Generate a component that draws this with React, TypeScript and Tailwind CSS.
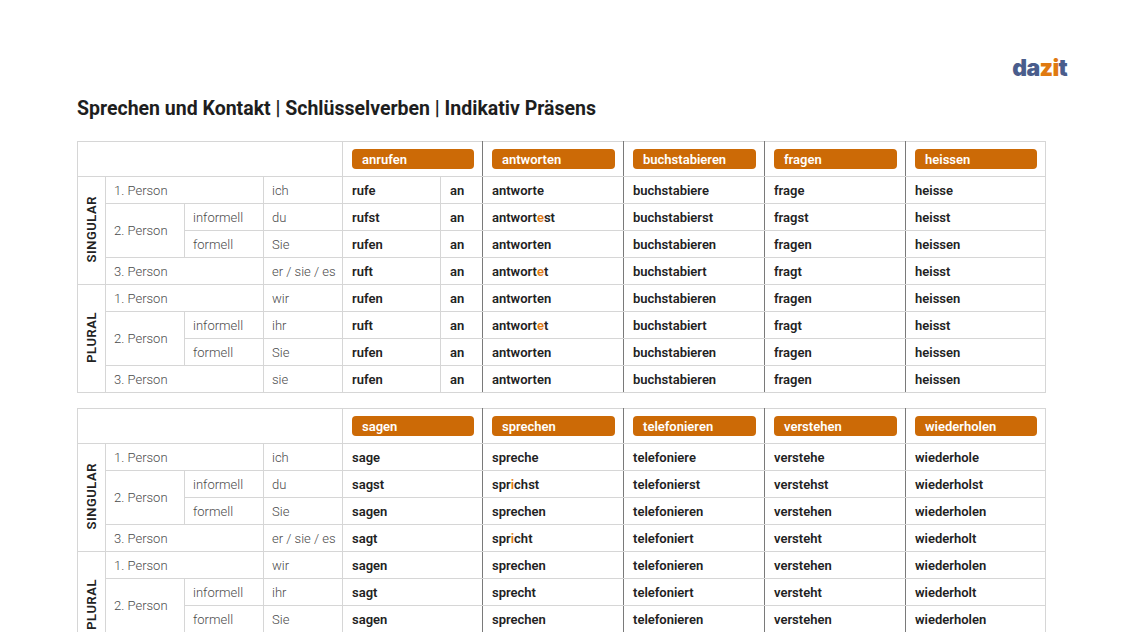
import React from 'react';

type Block = {
  verbs: string[];
  separable?: boolean;
  forms: string[][];
};

const persons = [
  { group: 'SINGULAR', person: '1. Person', pron: 'ich' },
  { person: '2. Person', sub: 'informell', pron: 'du' },
  { sub: 'formell', pron: 'Sie' },
  { person: '3. Person', pron: 'er / sie / es' },
  { group: 'PLURAL', person: '1. Person', pron: 'wir' },
  { person: '2. Person', sub: 'informell', pron: 'ihr' },
  { sub: 'formell', pron: 'Sie' },
  { person: '3. Person', pron: 'sie' },
];

const blocks: Block[] = [
  {
    verbs: ['anrufen', 'antworten', 'buchstabieren', 'fragen', 'heissen'],
    separable: true,
    forms: [
      ['rufe', 'rufst', 'rufen', 'ruft', 'rufen', 'ruft', 'rufen', 'rufen'],
      ['antworte', 'antwort[e]st', 'antworten', 'antwort[e]t', 'antworten', 'antwort[e]t', 'antworten', 'antworten'],
      ['buchstabiere', 'buchstabierst', 'buchstabieren', 'buchstabiert', 'buchstabieren', 'buchstabiert', 'buchstabieren', 'buchstabieren'],
      ['frage', 'fragst', 'fragen', 'fragt', 'fragen', 'fragt', 'fragen', 'fragen'],
      ['heisse', 'heisst', 'heissen', 'heisst', 'heissen', 'heisst', 'heissen', 'heissen'],
    ],
  },
  {
    verbs: ['sagen', 'sprechen', 'telefonieren', 'verstehen', 'wiederholen'],
    forms: [
      ['sage', 'sagst', 'sagen', 'sagt', 'sagen', 'sagt', 'sagen', 'sagen'],
      ['spreche', 'spr[i]chst', 'sprechen', 'spr[i]cht', 'sprechen', 'sprecht', 'sprechen', 'sprechen'],
      ['telefoniere', 'telefonierst', 'telefonieren', 'telefoniert', 'telefonieren', 'telefoniert', 'telefonieren', 'telefonieren'],
      ['verstehe', 'verstehst', 'verstehen', 'versteht', 'verstehen', 'versteht', 'verstehen', 'verstehen'],
      ['wiederhole', 'wiederholst', 'wiederholen', 'wiederholt', 'wiederholen', 'wiederholt', 'wiederholen', 'wiederholen'],
    ],
  },
];

// "antwort[e]st" -> orange letters in brackets
function Form({ text }: { text: string }) {
  const parts = text.split(/(\[[^\]]+\])/);
  return (
    <>
      {parts.map((p, i) =>
        p.startsWith('[') ? (
          <span key={i} className="text-[#e07a10]">{p.slice(1, -1)}</span>
        ) : (
          <span key={i}>{p}</span>
        )
      )}
    </>
  );
}

const cell = 'border border-[#d6d6d6] h-[27px] py-0 align-middle';
const label = `${cell} pl-2 font-light text-[#4a4a4a]`;
const form = `${cell} pl-[9px] font-semibold text-[#222]`;
const verbEdge = 'border-r-[#7a7a7a]';

function ConjTable({ block }: { block: Block }) {
  return (
    <table className="w-[968px] table-fixed border-collapse text-[13px] leading-none">
      <colgroup>
        <col className="w-[28px]" />
        <col className="w-[79px]" />
        <col className="w-[79px]" />
        <col className="w-[79px]" />
        <col className="w-[98px]" />
        <col className="w-[42px]" />
        <col className="w-[141px]" />
        <col className="w-[141px]" />
        <col className="w-[141px]" />
        <col className="w-[140px]" />
      </colgroup>
      <thead>
        <tr>
          <th colSpan={4} className="border border-[#d6d6d6] h-[35px]"></th>
          {block.verbs.map((v, i) => (
            <th
              key={v}
              colSpan={i === 0 ? 2 : 1}
              className={`border border-[#d6d6d6] h-[35px] pl-[9px] pr-[8px] py-0 text-left align-middle ${i < 4 ? verbEdge : ''}`}
            >
              <div className="h-5 rounded-[4px] bg-[#cc6a06] pl-[10px] flex items-center text-white font-semibold text-[13px]">
                {v}
              </div>
            </th>
          ))}
        </tr>
      </thead>
      <tbody>
        {persons.map((p, r) => (
          <tr key={r}>
            {p.group && (
              <td rowSpan={4} className={`${cell} p-0 text-center`}>
                <span className="inline-block [writing-mode:vertical-rl] rotate-180 font-semibold text-[13px] tracking-[0.04em] text-[#222]">
                  {p.group}
                </span>
              </td>
            )}
            {p.person && !p.sub && (
              <td colSpan={2} className={label}>{p.person}</td>
            )}
            {p.person && p.sub && (
              <td rowSpan={2} className={label}>{p.person}</td>
            )}
            {p.sub && <td className={label}>{p.sub}</td>}
            <td className={label}>{p.pron}</td>
            {block.forms.map((col, c) =>
              c === 0 && block.separable ? (
                <React.Fragment key={c}>
                  <td className={form}><Form text={col[r]} /></td>
                  <td className={`${form} ${verbEdge}`}>an</td>
                </React.Fragment>
              ) : (
                <td
                  key={c}
                  colSpan={c === 0 ? 2 : 1}
                  className={`${form} ${c < 4 ? verbEdge : ''}`}
                >
                  <Form text={col[r]} />
                </td>
              )
            )}
          </tr>
        ))}
      </tbody>
    </table>
  );
}

export default function App() {
  return (
    <div className="min-h-screen bg-white font-['Roboto',sans-serif] text-[#222]">
      <div className="w-[1123px] px-[77px] pt-[57px]">
        <div className="flex justify-end">
          <span className="mr-[-21px] text-[23px] font-black leading-none tracking-[-0.03em] font-['Inter',sans-serif]">
            <span className="text-[#4a5d8c]">da</span>
            <span className="text-[#e07a10]">zi</span>
            <span className="text-[#4a5d8c]">t</span>
          </span>
        </div>
        <h1 className="mt-[16px] text-[19.5px] font-bold leading-[26px] text-[#1e1e1e]">
          Sprechen und Kontakt | Schlüsselverben | Indikativ Präsens
        </h1>
        <div className="mt-[19px] flex flex-col gap-[15px]">
          {blocks.map((b, i) => (
            <ConjTable key={i} block={b} />
          ))}
        </div>
      </div>
    </div>
  );
}
